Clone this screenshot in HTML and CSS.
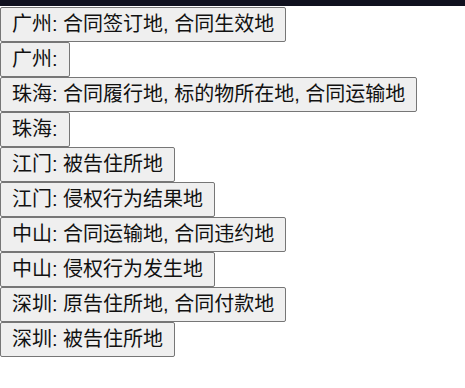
FILE: index.html
```html
<!DOCTYPE html>
<html lang="zh">
<head>
<meta charset="utf-8">
<link rel="stylesheet" href="styles.css">
</head>
<body>
<div class="topbar"></div>
<div class="list">
<button class="btn">广州: 合同签订地, 合同生效地</button>
<button class="btn">广州:</button>
<button class="btn">珠海: 合同履行地, 标的物所在地, 合同运输地</button>
<button class="btn">珠海:</button>
<button class="btn">江门: 被告住所地</button>
<button class="btn">江门: 侵权行为结果地</button>
<button class="btn">中山: 合同运输地, 合同违约地</button>
<button class="btn">中山: 侵权行为发生地</button>
<button class="btn">深圳: 原告住所地, 合同付款地</button>
<button class="btn">深圳: 被告住所地</button>
</div>
</body>
</html>
```
FILE: styles.css
```css
html, body {
  margin: 0;
  padding: 0;
  background: #fff;
}
.topbar {
  height: 6px;
  background: #10111f;
}
.list {
  display: flex;
  flex-direction: column;
  align-items: flex-start;
  padding-top: 1px;
}
.btn {
  font-family: "Liberation Sans", "Noto Sans CJK SC", sans-serif;
  font-size: 20px;
  line-height: 29px;
  color: #111;
  background: #efefef;
  border: 1px solid #767676;
  border-radius: 2px;
  padding: 2px 11px;
  margin: 0;
}
```
